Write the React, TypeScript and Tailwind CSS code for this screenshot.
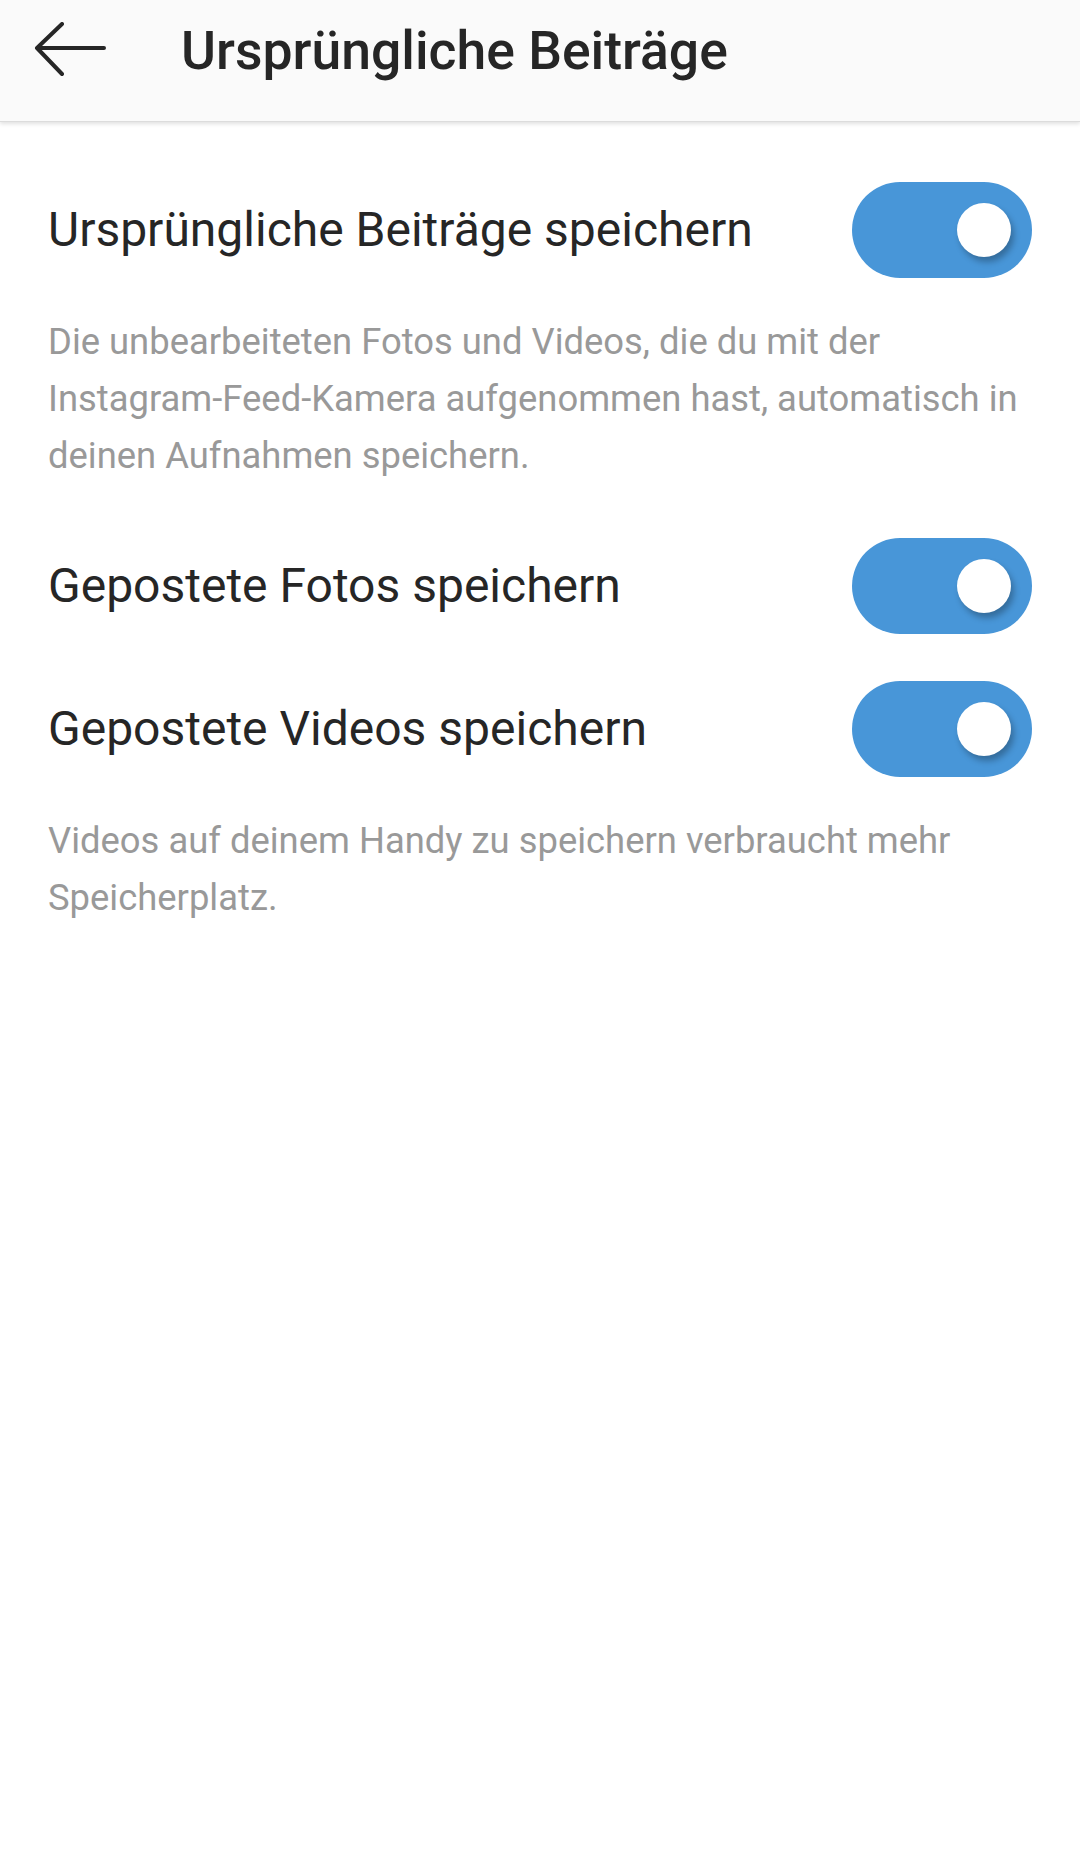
import { useState } from 'react'

function Toggle({ on, onChange }: { on: boolean; onChange: () => void }) {
  return (
    <button
      type="button"
      onClick={onChange}
      className={`relative flex h-[96px] w-[180px] shrink-0 items-center rounded-full ${
        on ? 'justify-end bg-[#4896d8]' : 'justify-start bg-[#c7c7c7]'
      } px-[21px]`}
    >
      <span className="block h-[54px] w-[54px] rounded-full bg-white shadow-[3px_5px_6px_rgba(0,0,0,0.28)]" />
    </button>
  )
}

export default function App() {
  const [original, setOriginal] = useState(true)
  const [photos, setPhotos] = useState(true)
  const [videos, setVideos] = useState(true)

  return (
    <main className="min-h-[1876px] bg-white font-['Roboto','Liberation_Sans',sans-serif]">
      {/* Header */}
      <header className="flex h-[122px] items-center bg-[#fafafa] shadow-[0_2px_4px_rgba(0,0,0,0.12)] border-b border-[#dcdcdc]">
        <button type="button" className="ml-[34px] mb-[22px] flex h-[56px] w-[74px] items-center">
          <svg width="74" height="56" viewBox="0 0 74 56" fill="none">
            <path
              d="M70 26H4M28 2L3 26L28 52"
              stroke="#262626"
              strokeWidth="4"
              strokeLinecap="round"
              strokeLinejoin="round"
            />
          </svg>
        </button>
        <h1 className="ml-[73px] pb-[19px] text-[53.5px] font-medium leading-none text-[#262626]">
          Ursprüngliche Beiträge
        </h1>
      </header>

      {/* Settings */}
      <section className="px-[48px] pt-[60px]">
        <div className="flex items-center justify-between">
          <span className="text-[48px] leading-none text-[#262626]">Ursprüngliche Beiträge speichern</span>
          <Toggle on={original} onChange={() => setOriginal(!original)} />
        </div>
        <p className="mt-[35px] text-[36.4px] leading-[57px] text-[#999999]">
          Die unbearbeiteten Fotos und Videos, die du mit der Instagram-Feed-Kamera aufgenommen hast, automatisch in
          deinen Aufnahmen speichern.
        </p>

        <div className="mt-[54px] flex items-center justify-between">
          <span className="text-[48px] leading-none text-[#262626]">Gepostete Fotos speichern</span>
          <Toggle on={photos} onChange={() => setPhotos(!photos)} />
        </div>

        <div className="mt-[47px] flex items-center justify-between">
          <span className="text-[48px] leading-none text-[#262626]">Gepostete Videos speichern</span>
          <Toggle on={videos} onChange={() => setVideos(!videos)} />
        </div>
        <p className="mt-[35px] text-[36.4px] leading-[57px] text-[#999999]">
          Videos auf deinem Handy zu speichern verbraucht mehr Speicherplatz.
        </p>
      </section>
    </main>
  )
}
